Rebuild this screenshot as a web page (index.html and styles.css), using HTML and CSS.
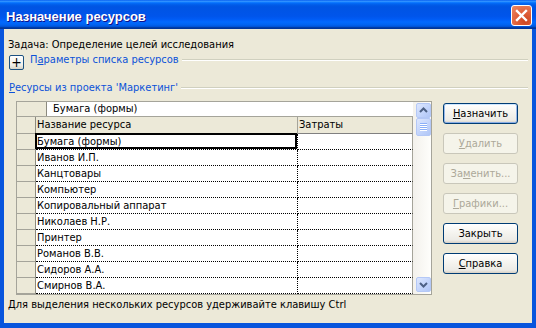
FILE: index.html
```html
<!DOCTYPE html>
<html lang="ru">
<head>
    <meta charset="UTF-8">
    <meta name="viewport" content="width=device-width, initial-scale=1.0">
    <title>Назначение ресурсов</title>
    <link rel="stylesheet" href="styles.css">
</head>
<body>

<div class="window">
    <div class="titlebar">
        <span class="title">Назначение ресурсов</span>
        <button class="close-btn" type="button" aria-label="Закрыть">
            <svg width="19" height="19" viewBox="0 0 19 19">
                <path d="M5 5 L14 14 M14 5 L5 14" stroke="#fff" stroke-width="2.4" stroke-linecap="square"/>
            </svg>
        </button>
    </div>

    <div class="client">
        <div class="task">Задача: Определение целей исследования</div>

        <div class="group">
            <span class="toggle">+</span>
            <span class="group-label">П<u>а</u>раметры списка ресурсов</span>
            <span class="rule"></span>
        </div>

        <div class="group group-res">
            <span class="group-label label-res"><u>Р</u>есурсы из проекта 'Маркетинг'</span>
            <span class="rule"></span>
        </div>

        <div class="main">
            <div class="grid">
                <div class="sheet">
                    <div class="edit-row">
                        <div class="stub stub-wide"></div>
                        <div class="edit-value">Бумага (формы)</div>
                    </div>
                    <div class="row head-row">
                        <div class="stub"></div>
                        <div class="cell name">Название ресурса</div>
                        <div class="cell cost">Затраты</div>
                    </div>
                    <div class="row">
                        <div class="stub"></div>
                        <div class="cell name selected">Бумага (формы)</div>
                        <div class="cell cost"></div>
                    </div>
                    <div class="row">
                        <div class="stub"></div>
                        <div class="cell name">Иванов И.П.</div>
                        <div class="cell cost"></div>
                    </div>
                    <div class="row">
                        <div class="stub"></div>
                        <div class="cell name">Канцтовары</div>
                        <div class="cell cost"></div>
                    </div>
                    <div class="row">
                        <div class="stub"></div>
                        <div class="cell name">Компьютер</div>
                        <div class="cell cost"></div>
                    </div>
                    <div class="row">
                        <div class="stub"></div>
                        <div class="cell name">Копировальный аппарат</div>
                        <div class="cell cost"></div>
                    </div>
                    <div class="row">
                        <div class="stub"></div>
                        <div class="cell name">Николаев Н.Р.</div>
                        <div class="cell cost"></div>
                    </div>
                    <div class="row">
                        <div class="stub"></div>
                        <div class="cell name">Принтер</div>
                        <div class="cell cost"></div>
                    </div>
                    <div class="row">
                        <div class="stub"></div>
                        <div class="cell name">Романов В.В.</div>
                        <div class="cell cost"></div>
                    </div>
                    <div class="row">
                        <div class="stub"></div>
                        <div class="cell name">Сидоров А.А.</div>
                        <div class="cell cost"></div>
                    </div>
                    <div class="row">
                        <div class="stub"></div>
                        <div class="cell name">Смирнов В.А.</div>
                        <div class="cell cost"></div>
                    </div>
                </div>

                <div class="vscroll">
                    <div class="sb-btn">
                        <svg width="13" height="13" viewBox="0 0 13 13">
                            <path d="M3 8 L6.5 4.5 L10 8" fill="none" stroke="#4d6185" stroke-width="2"/>
                        </svg>
                    </div>
                    <div class="sb-btn sb-thumb">
                        <svg width="13" height="16" viewBox="0 0 13 16">
                            <path d="M3 4.5 H10 M3 6.5 H10 M3 8.5 H10 M3 10.5 H10" stroke="#8cb0f8" stroke-width="1"/>
                            <path d="M3 5.5 H10 M3 7.5 H10 M3 9.5 H10 M3 11.5 H10" stroke="#fff" stroke-width="1"/>
                        </svg>
                    </div>
                    <div class="sb-track"></div>
                    <div class="sb-btn">
                        <svg width="13" height="13" viewBox="0 0 13 13">
                            <path d="M3 5 L6.5 8.5 L10 5" fill="none" stroke="#4d6185" stroke-width="2"/>
                        </svg>
                    </div>
                </div>
            </div>

            <div class="buttons">
                <button class="btn btn-default" type="button"><u>Н</u>азначить</button>
                <button class="btn" type="button" disabled><u>У</u>далить</button>
                <button class="btn" type="button" disabled>За<u>м</u>енить...</button>
                <button class="btn" type="button" disabled><u>Г</u>рафики...</button>
                <button class="btn" type="button">Закрыть</button>
                <button class="btn" type="button"><u>С</u>правка</button>
            </div>
        </div>

        <div class="hint">Для выделения нескольких ресурсов удерживайте клавишу Ctrl</div>
    </div>
</div>

</body>
</html>
```

FILE: styles.css
```css
/* Base */
* {
    box-sizing: border-box;
}

body {
    margin: 0;
    background: #fff;
    font-family: "DejaVu Sans Condensed", "Liberation Sans", sans-serif;
    font-size: 11px;
    color: #000;
}

/* Window frame */
.window {
    width: 536px;
    height: 328px;
    display: flex;
    flex-direction: column;
}

.titlebar {
    height: 29px;
    flex: none;
    display: flex;
    align-items: flex-start;
    justify-content: space-between;
    padding: 5px 4px 0 6px;
    background: linear-gradient(to bottom,
        #0058ee 0%, #3593ff 4%, #288eff 6%, #127dff 8%, #036ffc 10%,
        #0262ee 14%, #0057e5 20%, #0054e3 24%, #0055eb 56%, #005bf5 66%,
        #026afe 76%, #0062ef 86%, #0052d6 92%, #0040ab 94%, #003092 100%);
}

.title {
    color: #fff;
    font: bold 13px "Liberation Sans", sans-serif;
    line-height: 21px;
    padding-top: 1px;
    text-shadow: 1px 1px #0f1089;
}

.close-btn {
    width: 21px;
    height: 21px;
    padding: 0;
    border: 1px solid #fff;
    border-radius: 3px;
    background: radial-gradient(circle at 70% 80%, #cc4620 0%, #e0603a 45%, #ec8a66 100%);
    display: flex;
    align-items: center;
    justify-content: center;
}

.client {
    flex: 1;
    display: flex;
    flex-direction: column;
    padding: 9px 0 0 4px;
    background: #ece9d8;
    border: solid #0855dd;
    border-width: 0 4px 5px 4px;
}

/* Header texts */
.task {
    line-height: 13px;
}

.group {
    display: flex;
    align-items: flex-start;
    margin-top: 2px;
    line-height: 13px;
}

.group-res {
    margin-top: 11px;
}

.toggle {
    width: 15px;
    height: 15px;
    margin: 2px 0 0 1px;
    border: 1px solid #1c5180;
    border-radius: 2px;
    background: linear-gradient(to bottom, #fff, #f0efe8 70%, #d8d4c6);
    font-size: 14px;
    line-height: 12px;
    text-align: center;
}

.group-label {
    color: #0b52d9;
    margin-left: 6px;
}

.label-res {
    margin-left: 1px;
}

.rule {
    flex: 1;
    margin: 6px 4px 0 3px;
    height: 2px;
    border-top: 1px solid #d0d0bf;
    border-bottom: 1px solid #fff;
}

/* Grid + buttons */
.main {
    display: flex;
    align-items: flex-start;
    margin-top: 7px;
}

.grid {
    width: 416px;
    margin-left: 8px;
    display: flex;
    border: 1px solid #a5a49a;
    background: #fff;
}

.sheet {
    width: 396px;
    display: flex;
    flex-direction: column;
}

.edit-row {
    display: flex;
    height: 15px;
    border-bottom: 1px solid #a5a49a;
}

.edit-value {
    flex: 1;
    padding-left: 6px;
    line-height: 14px;
}

.row {
    display: flex;
    height: 16px;
}

.head-row {
    height: 17px;
}

.stub {
    width: 19px;
    flex: none;
    background: #ece9d8;
    border-right: 1px solid #8c8a7e;
    border-bottom: 1px solid #a5a49a;
}

.stub-wide {
    width: 30px;
    border-bottom: none;
}

.cell {
    padding-left: 1px;
    line-height: 15px;
    white-space: nowrap;
    border-bottom: 1px dotted #000;
}

.cell.name {
    width: 262px;
    border-right: 1px dotted #000;
}

.cell.cost {
    flex: 1;
    border-right: 1px solid #a5a49a;
}

.head-row .cell {
    background: #ece9d8;
    line-height: 16px;
    border-bottom: 1px solid #808080;
}

.head-row .cell.name {
    border-right: 1px solid #a5a49a;
}

.selected {
    position: relative;
}

.selected::after {
    content: "";
    position: absolute;
    top: -1px;
    left: -1px;
    right: 0;
    bottom: 0;
    border: 2px solid #000;
}

/* Scrollbar */
.vscroll {
    width: 18px;
    display: flex;
    flex-direction: column;
    padding: 1px 0 2px 3px;
    background: linear-gradient(to right, #f3f1ec, #fefefb);
}

.sb-btn {
    width: 15px;
    height: 15px;
    border: 1px solid #b4c8f6;
    border-radius: 2px;
    background: linear-gradient(135deg, #dde7fe, #c1d3fb 60%, #b0c6f6);
    display: flex;
    align-items: center;
    justify-content: center;
}

.sb-thumb {
    height: 18px;
}

.sb-track {
    flex: 1;
}

.buttons {
    display: flex;
    flex-direction: column;
    gap: 9px;
    margin: 2px 0 0 11px;
}

.btn {
    width: 75px;
    height: 21px;
    padding: 0;
    border: 1px solid #003c74;
    border-radius: 3px;
    background: linear-gradient(to bottom, #fff 0%, #f4f3ee 50%, #ecebe6 85%, #d6d0c5 100%);
    font: 11px "DejaVu Sans Condensed", "Liberation Sans", sans-serif;
    color: #000;
}

.btn-default {
    box-shadow: inset 0 1px #cee7ff, inset 1px 0 #98b8ea, inset -1px 0 #98b8ea, inset 0 -1px #89ade4;
}

.btn:disabled {
    border-color: #c9c7ba;
    background: #f5f4ea;
    color: #aca899;
}

.hint {
    margin-top: 3px;
    line-height: 13px;
}
```
